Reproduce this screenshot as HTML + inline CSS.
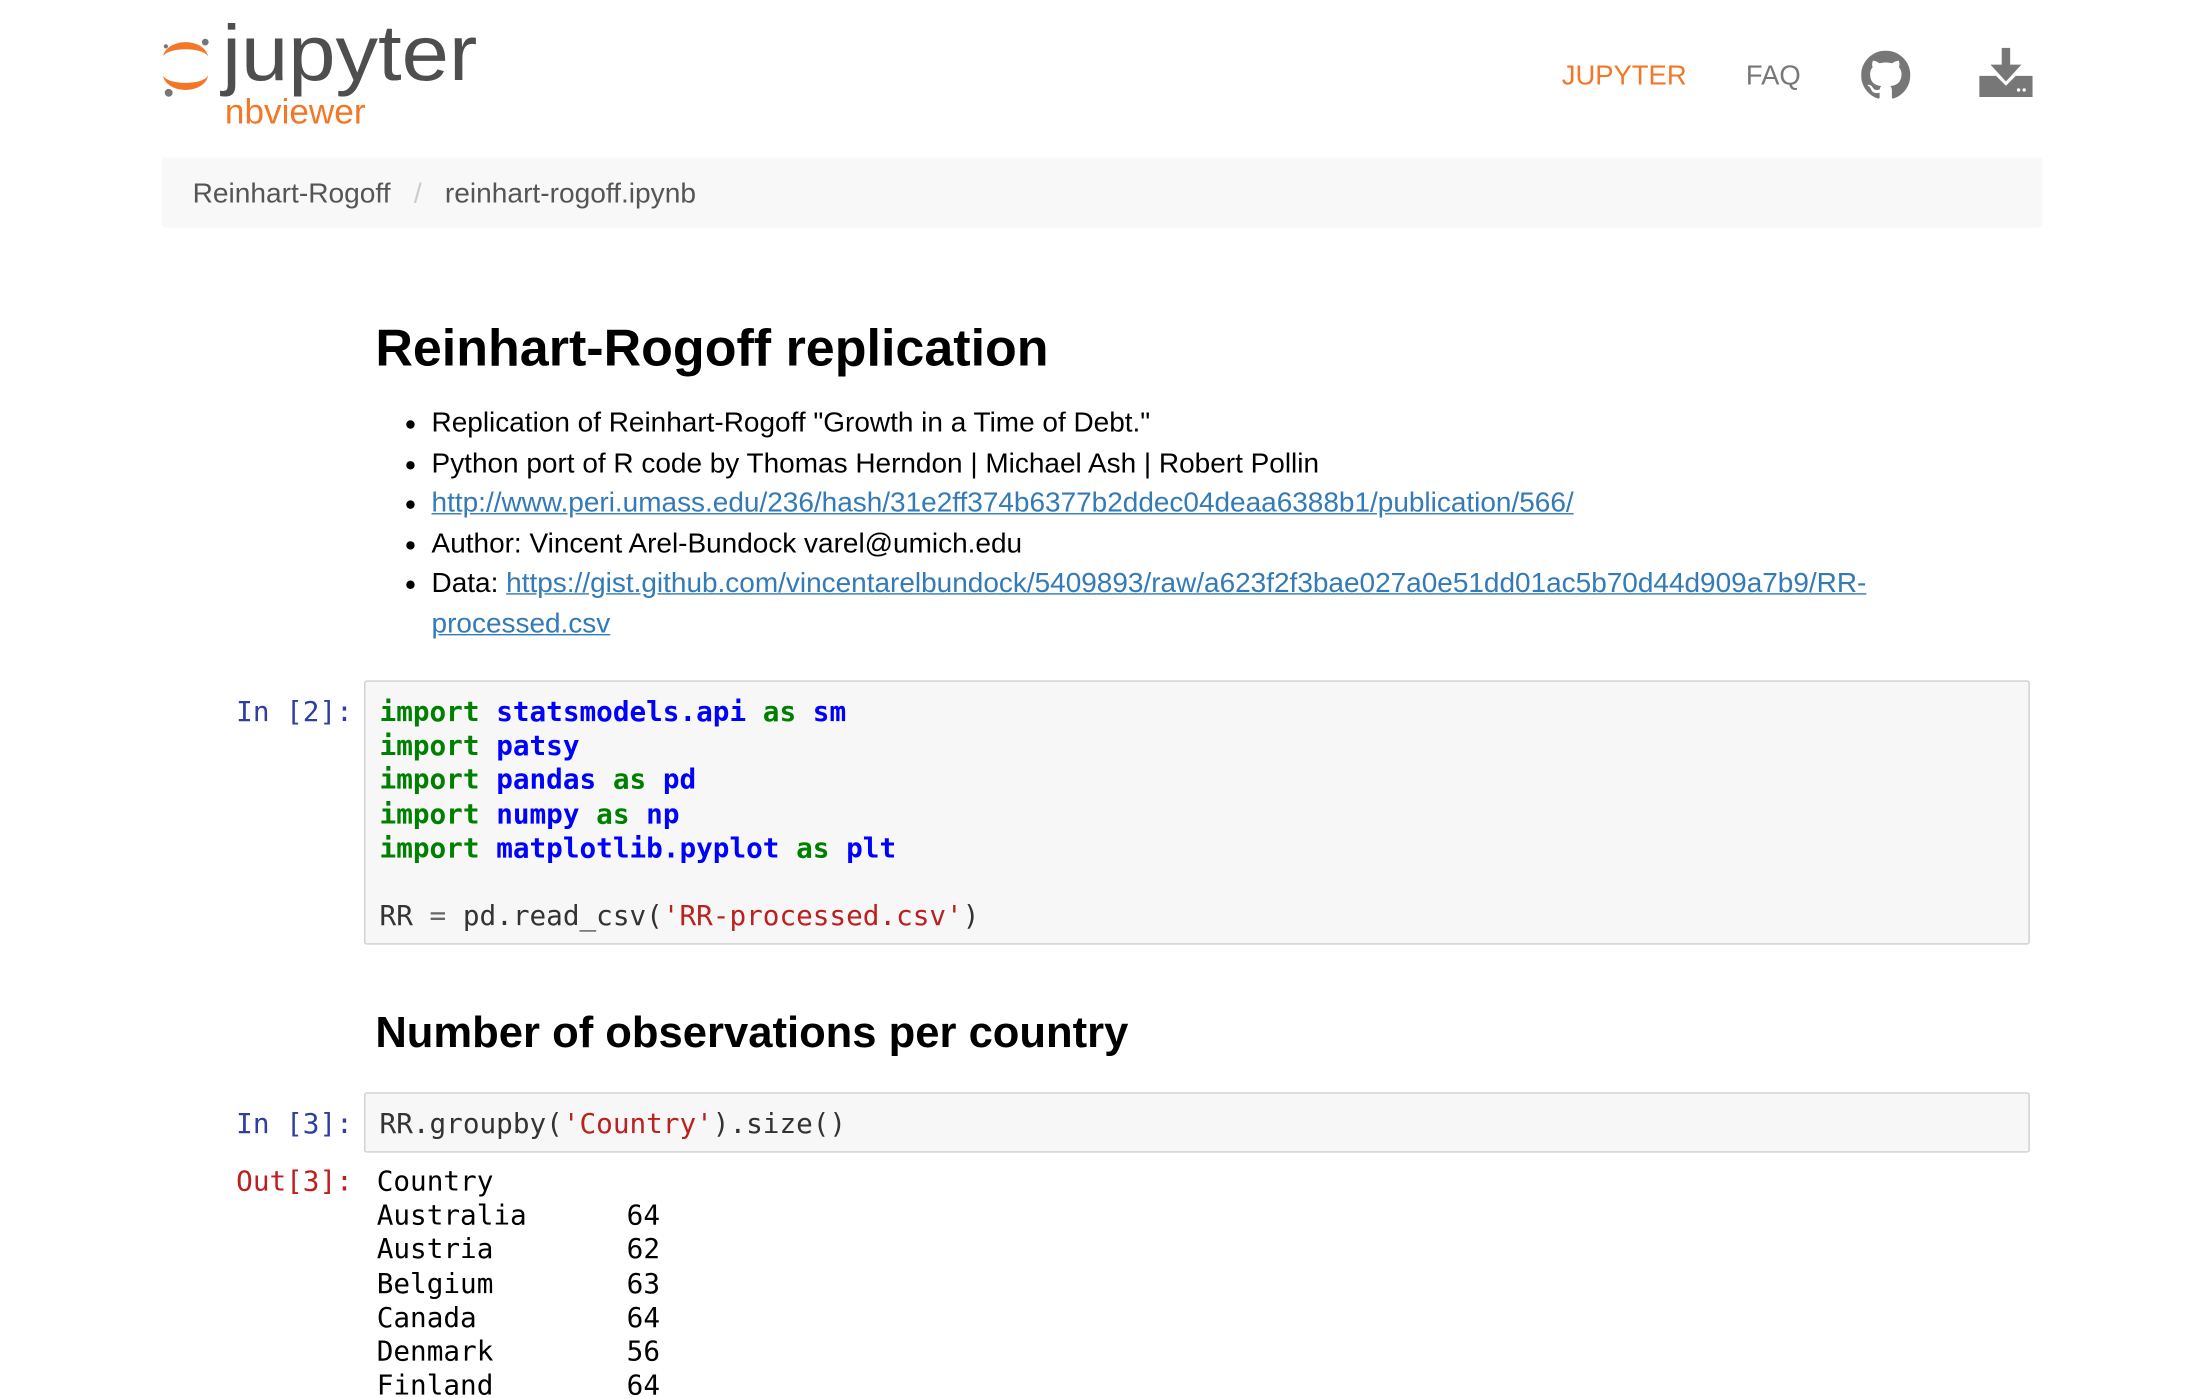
<!DOCTYPE html>
<html><head><meta charset="utf-8"><style>
html,body{margin:0;padding:0;background:#fff;overflow:hidden}
body{width:2204px;height:1398px;position:relative}
#w{position:absolute;left:0;top:0;width:1570px;height:995px;transform:scale(1.4057);transform-origin:0 0;font-family:"Liberation Sans",sans-serif}
.a{position:absolute;white-space:pre}
.m{font-family:"DejaVu Sans Mono","Liberation Mono",monospace;font-size:19.7px;line-height:24.2px}
.k{color:#008000;font-weight:bold}
.n{color:#0000ff;font-weight:bold}
.s{color:#ba2121}
.o{color:#666}
.p{color:#303f9f}
.r{color:#bf1e1e}
a{color:#337ab7;text-decoration:underline}
ul{margin:0;padding:0;list-style:none}
li{position:relative;font-size:19.9px;line-height:28.6px;color:#000}
li:before{content:"";position:absolute;left:-18px;top:12px;width:6px;height:6px;border-radius:50%;background:#000}
</style></head><body><div id="w">
<svg class="a" style="left:113px;top:24px" width="38" height="48" viewBox="0 0 38 48">
<path d="M3 17 A16 11 0 0 1 35 17 A16 6 0 0 0 3 17Z" fill="#f37726"/>
<path d="M3 29 A16 11 0 0 0 35 29 A16 6 0 0 1 3 29Z" fill="#f37726"/>
<circle cx="33" cy="6" r="2.4" fill="#767677"/>
<circle cx="5" cy="9" r="1.5" fill="#767677"/>
<circle cx="7" cy="42" r="2.8" fill="#767677"/>
</svg>
<div class="a" style="left:158px;top:5px;font-size:56px;color:#4e4e4e;transform:scaleX(1.08);transform-origin:0 0">jupyter</div>
<div class="a" style="left:160px;top:66px;font-size:25px;color:#f37726">nbviewer</div>
<div class="a" style="left:1111px;top:43px;font-size:19.5px;color:#f37726">JUPYTER</div>
<div class="a" style="left:1242px;top:43px;font-size:19.5px;color:#777">FAQ</div>
<svg class="a" style="left:1324px;top:36px" width="35" height="35" viewBox="0 0 16 16"><path fill="#777" d="M8 0C3.58 0 0 3.58 0 8c0 3.54 2.29 6.53 5.47 7.59.4.07.55-.17.55-.38 0-.19-.01-.82-.01-1.49-2.01.37-2.53-.49-2.690-.94-.09-.23-.48-.94-.82-1.130-.28-.15-.68-.52-.01-.53.63-.01 1.08.58 1.230.82.72 1.21 1.87.87 2.33.66.07-.52.28-.87.51-1.07-1.78-.2-3.64-.89-3.64-3.95 0-.87.31-1.59.82-2.15-.08-.2-.36-1.020.08-2.12 0 0 .67-.21 2.2.82.64-.18 1.32-.27 2-.27.68 0 1.36.09 2 .27 1.53-1.04 2.2-.82 2.2-.82.44 1.1.16 1.92.08 2.12.51.56.82 1.27.82 2.15 0 3.07-1.87 3.75-3.65 3.950.29.25.54.73.54 1.48 0 1.07-.01 1.93-.01 2.2 0 .21.15.46.55.38A8.013 8.013 0 0016 8c0-4.420-3.58-8-8-8z"/></svg>
<svg class="a" style="left:1408px;top:34px" width="38" height="35" viewBox="0 0 38 35">
<rect x="16" y="0" width="6" height="14" fill="#777"/>
<path d="M8 12 H30 L19 24Z" fill="#777"/>
<path d="M0 20 H12 L19 27 L26 20 H38 V35 H0Z" fill="#777"/>
<circle cx="28" cy="30" r="1.2" fill="#fff"/><circle cx="32" cy="30" r="1.2" fill="#fff"/>
</svg>
<div class="a" style="left:115px;top:112px;width:1338px;height:50px;background:#f8f8f8;border-radius:3px"></div>
<div class="a" style="left:137px;top:127px;font-size:20px;color:#555">Reinhart-Rogoff <span style="color:#ccc;padding:0 11px">/</span> reinhart-rogoff.ipynb</div>
<div class="a" style="left:267px;top:227px;font-size:37px;font-weight:bold;color:#000">Reinhart-Rogoff replication</div>
<ul class="a" style="left:307px;top:287px;white-space:normal;width:1100px">
<li>Replication of Reinhart-Rogoff "Growth in a Time of Debt."</li>
<li>Python port of R code by Thomas Herndon | Michael Ash | Robert Pollin</li>
<li><a>http://www.peri.umass.edu/236/hash/31e2ff374b6377b2ddec04deaa6388b1/publication/566/</a></li>
<li>Author: Vincent Arel-Bundock varel@umich.edu</li>
<li>Data: <a>https://gist.github.com/vincentarelbundock/5409893/raw/a623f2f3bae027a0e51dd01ac5b70d44d909a7b9/RR-<br>processed.csv</a></li>
</ul>
<div class="a m p" style="left:168px;top:495px">In [2]:</div>
<div class="a" style="left:259px;top:484px;width:1183px;height:186px;background:#f7f7f7;border:1px solid #cfcfcf;border-radius:2px"></div>
<div class="a m" style="left:270px;top:495px;color:#333"><span class="k">import</span> <span class="n">statsmodels.api</span> <span class="k">as</span> <span class="n">sm</span>
<span class="k">import</span> <span class="n">patsy</span>
<span class="k">import</span> <span class="n">pandas</span> <span class="k">as</span> <span class="n">pd</span>
<span class="k">import</span> <span class="n">numpy</span> <span class="k">as</span> <span class="n">np</span>
<span class="k">import</span> <span class="n">matplotlib.pyplot</span> <span class="k">as</span> <span class="n">plt</span>

RR <span class="o">=</span> pd.read_csv(<span class="s">'RR-processed.csv'</span>)</div>
<div class="a" style="left:267px;top:717px;font-size:31px;font-weight:bold;color:#000">Number of observations per country</div>
<div class="a m p" style="left:168px;top:788px">In [3]:</div>
<div class="a" style="left:259px;top:777px;width:1183px;height:41px;background:#f7f7f7;border:1px solid #cfcfcf;border-radius:2px"></div>
<div class="a m" style="left:270px;top:788px;color:#333">RR.groupby(<span class="s">'Country'</span>).size()</div>
<div class="a m r" style="left:168px;top:829px">Out[3]:</div>
<div class="a m" style="left:268px;top:829px;color:#000">Country
Australia      64
Austria        62
Belgium        63
Canada         64
Denmark        56
Finland        64</div>
</div></body></html>
